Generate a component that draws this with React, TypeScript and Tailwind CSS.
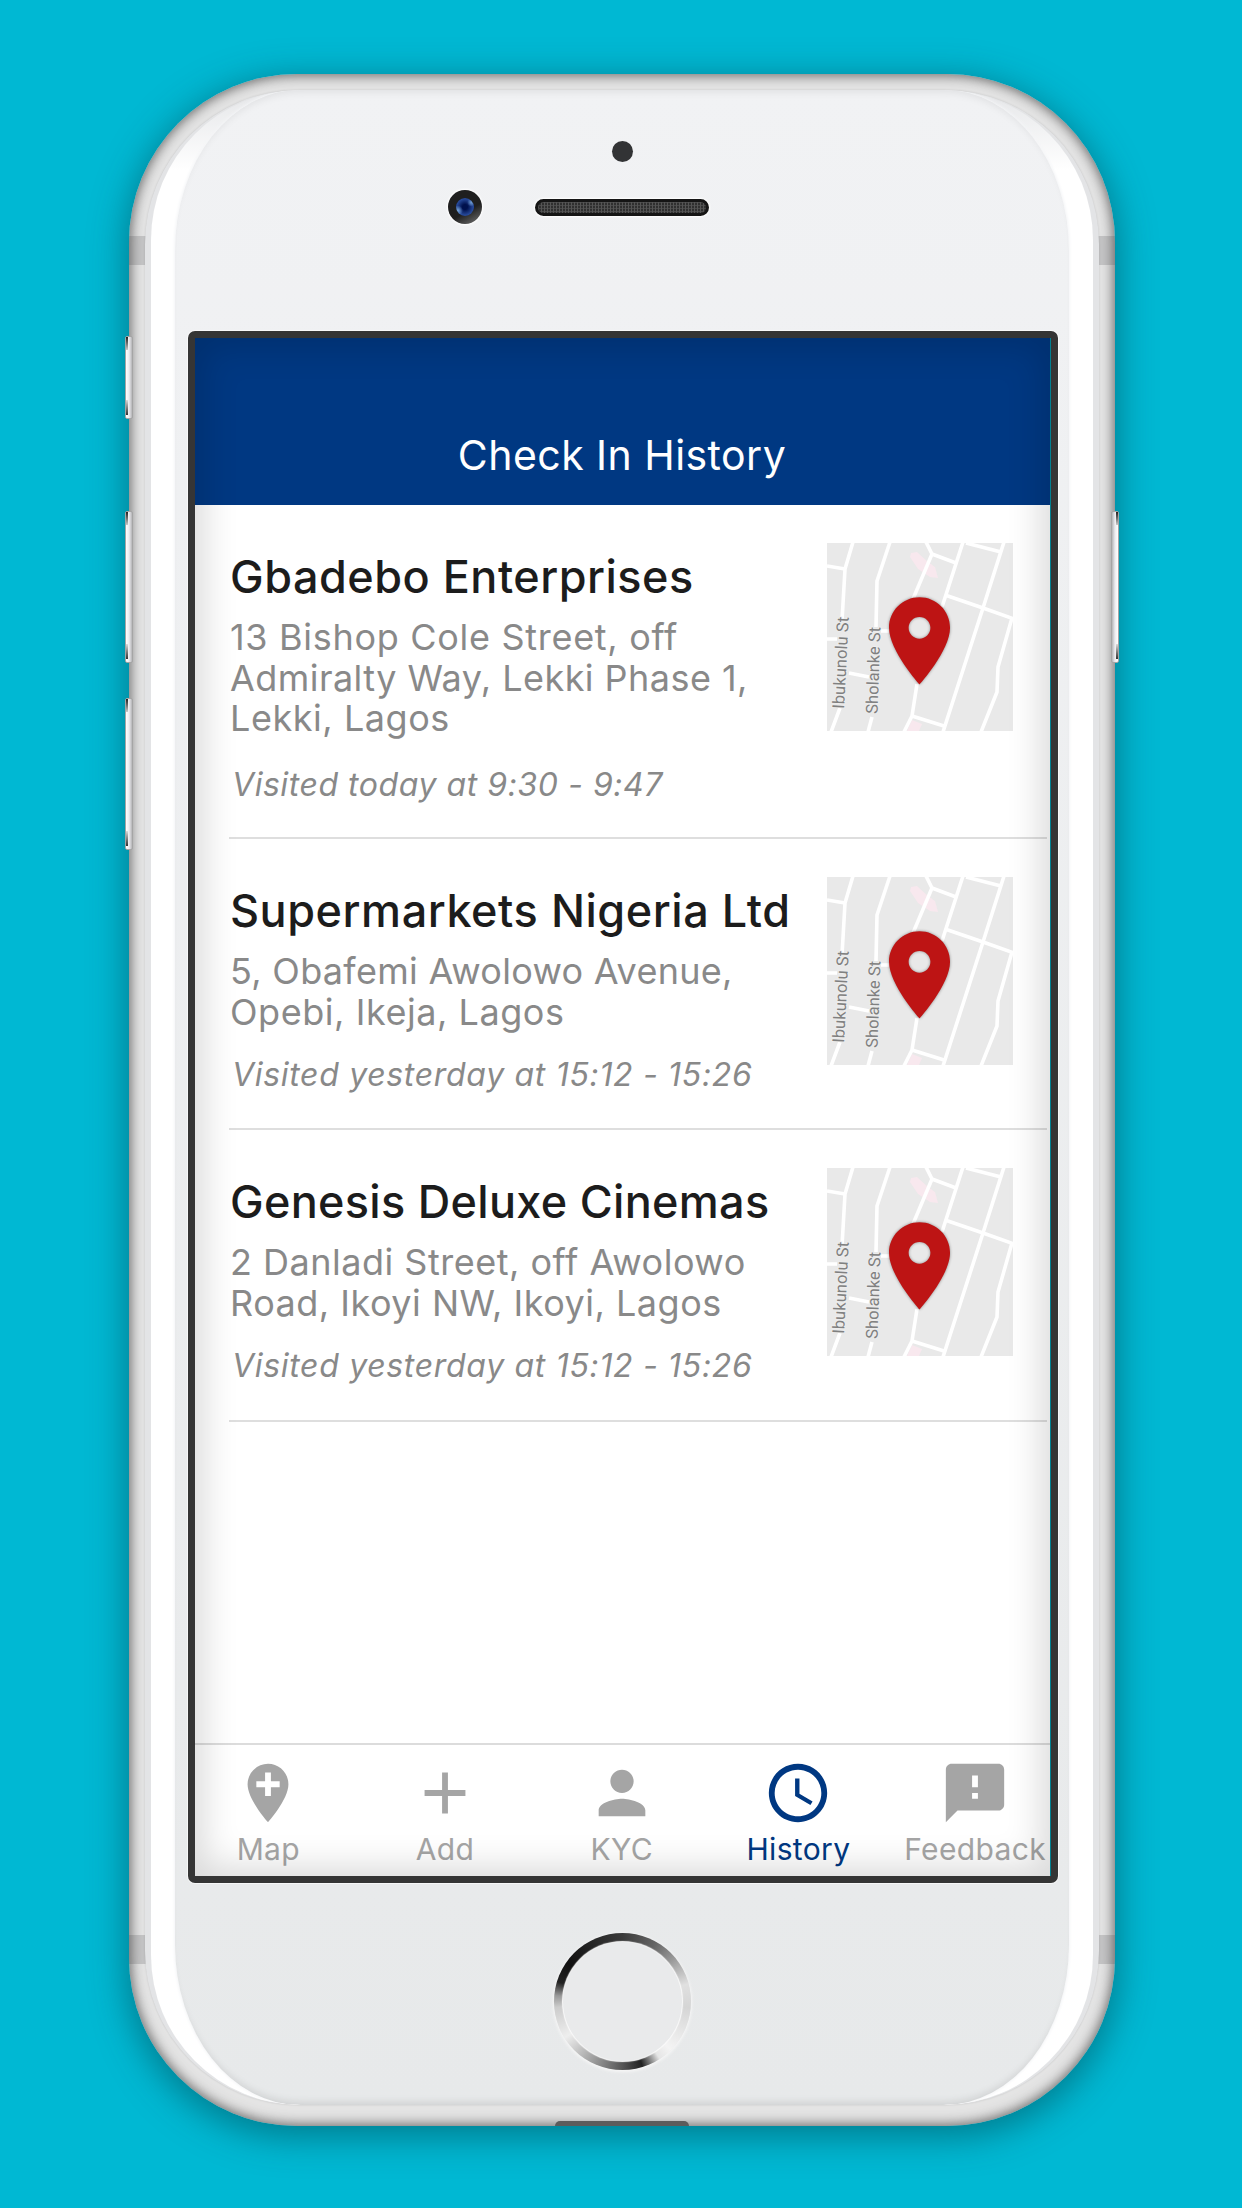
import clsx from 'clsx';

type Visit = {
  id: number;
  name: string;
  nameClass: string;
  address: { text: string; className: string }[];
  visited: string;
  visitedClass: string;
  rowClass: string;
};

const visits: Visit[] = [
  {
    id: 1,
    name: 'Gbadebo Enterprises',
    nameClass: 'tracking-[0.5px]',
    address: [
      { text: '13 Bishop Cole Street, off', className: 'tracking-[0.7px]' },
      { text: 'Admiralty Way, Lekki Phase 1,', className: 'tracking-[0.45px]' },
      { text: 'Lekki, Lagos', className: 'tracking-[0.55px]' },
    ],
    visited: 'Visited today at 9:30 - 9:47',
    visitedClass: 'mt-[28px] tracking-[0.55px]',
    rowClass: 'h-[334px]',
  },
  {
    id: 2,
    name: 'Supermarkets Nigeria Ltd',
    nameClass: 'tracking-[0.55px]',
    address: [
      { text: '5, Obafemi Awolowo Avenue,', className: 'tracking-[0.3px]' },
      { text: 'Opebi, Ikeja, Lagos', className: 'tracking-[0.55px]' },
    ],
    visited: 'Visited yesterday at 15:12 - 15:26',
    visitedClass: 'mt-[25px] tracking-[0.68px]',
    rowClass: 'h-[291px]',
  },
  {
    id: 3,
    name: 'Genesis Deluxe Cinemas',
    nameClass: 'tracking-[0.3px]',
    address: [
      { text: '2 Danladi Street, off Awolowo', className: 'tracking-[0.5px]' },
      { text: 'Road, Ikoyi NW, Ikoyi, Lagos', className: 'tracking-[0.5px]' },
    ],
    visited: 'Visited yesterday at 15:12 - 15:26',
    visitedClass: 'mt-[25px] tracking-[0.68px]',
    rowClass: 'h-[292px]',
  },
];

const tabs = [
  {
    label: 'Map',
    path: 'M12 2C8.14 2 5 5.14 5 9c0 5.25 7 13 7 13s7-7.75 7-13c0-3.86-3.14-7-7-7zm4 8h-3v3h-2v-3H8V8h3V5h2v3h3v2z',
  },
  { label: 'Add', path: 'M19 13h-6v6h-2v-6H5v-2h6V5h2v6h6v2z' },
  {
    label: 'KYC',
    path: 'M12 12c2.21 0 4-1.79 4-4s-1.79-4-4-4-4 1.79-4 4 1.79 4 4 4zm0 2c-2.67 0-8 1.34-8 4v2h16v-2c0-2.66-5.33-4-8-4z',
  },
  {
    label: 'History',
    path: 'M11.99 2C6.47 2 2 6.48 2 12s4.47 10 9.99 10C17.52 22 22 17.52 22 12S17.52 2 11.99 2zM12 20c-4.42 0-8-3.58-8-8s3.58-8 8-8 8 3.58 8 8-3.58 8-8 8zm.5-13H11v6l5.25 3.15.75-1.23-4.5-2.67z',
    active: true,
  },
  {
    label: 'Feedback',
    path: 'M20 2H4c-1.1 0-1.99.9-1.99 2L2 22l4-4h14c1.1 0 2-.9 2-2V4c0-1.1-.9-2-2-2zm-7 12h-2v-2h2v2zm0-4h-2V6h2v4z',
  },
];

function MapThumb() {
  return (
    <svg viewBox="0 0 186 188" className="w-[186px] h-[188px] shrink-0 mt-[38px] bg-[#e9e9e9]">
      <path d="M84 10l6-1 11 10 7 5 3 11-8-1-12-8-8-12z M85 177l10 4-3 7H80z" fill="#f8e8ee" />
      <g fill="none" stroke="#fff" strokeWidth="3.6">
        <path d="M26 -1L18 26 15 78 M0 23L18 26 M0 96h10 M13 165L4 189 M22 130l20 4" />
        <path d="M63 -1L50 38 49 84 M54 88h9 M45 174L41 189" />
        <path d="M99 -1L105 11 86 56 M105 11l24 9 M90 141L85 173 77 189 M85 173l32 10" />
        <path d="M136 -1L115 64 M139 0l35 9 M177 -1L156 65 116 189 M118 52l38 13 31 11" />
        <path d="M185 75L171 124 170 149 154 189" />
      </g>
      <g fill="#808080" stroke="#eee" strokeWidth="1.6" paintOrder="stroke" fontSize="16.5" fontFamily="Roboto, sans-serif">
        <text transform="translate(17 166) rotate(-87)" textLength="92" lengthAdjust="spacingAndGlyphs">Ibukunolu St</text>
        <text transform="translate(50.5 171) rotate(-88)" textLength="87" lengthAdjust="spacingAndGlyphs">Sholanke St</text>
      </g>
      <path
        transform="translate(40.2 45.6) scale(4.36)"
        d="M12 2C8.13 2 5 5.13 5 9c0 5.25 7 13 7 13s7-7.75 7-13c0-3.87-3.13-7-7-7zm0 9.5c-1.38 0-2.5-1.12-2.5-2.5s1.12-2.5 2.5-2.5 2.5 1.12 2.5 2.5-1.12 2.5-2.5 2.5z"
        fill="#bd1414"
        className="drop-shadow-[0_0.3px_0.4px_rgba(0,0,0,0.4)]"
      />
    </svg>
  );
}

function VisitRow({ visit }: { visit: Visit }) {
  return (
    <li className={clsx('flex justify-between ml-[34px] mr-[4px] pr-[34px] border-b-2 border-[#dedede]', visit.rowClass)}>
      <div className="pt-[42px] pl-px whitespace-nowrap">
        <h2 className={clsx('text-[45px] leading-[60px] font-medium text-[#1c1c1c]', visit.nameClass)}>{visit.name}</h2>
        <div className="mt-[10px] text-[36px] leading-[40.7px] text-[#898989]">
          {visit.address.map((line) => (
            <p key={line.text} className={line.className}>{line.text}</p>
          ))}
        </div>
        <p className={clsx('pl-[2px] text-[32px] leading-[36px] italic text-[#898989]', visit.visitedClass)}>{visit.visited}</p>
      </div>
      <MapThumb />
    </li>
  );
}

function TabBar() {
  return (
    <nav className="flex -mx-[15px] h-[133px] border-t-2 border-[#dcdcdc]">
      {tabs.map((tab) => (
        <button
          key={tab.label}
          className={clsx('flex flex-col items-center w-[176.7px] shrink-0 pt-[13px]', tab.active ? 'text-[#003882]' : 'text-[#a5a5a5]')}
        >
          <svg viewBox="0 0 24 24" fill="currentColor" className="size-[70px] block">
            <path d={tab.path} />
          </svg>
          <span className="text-[30px] leading-[36px] mt-[3px] tracking-[0.35px]">{tab.label}</span>
        </button>
      ))}
    </nav>
  );
}

function Screen() {
  return (
    <div className="relative ml-[13px] w-[870px] h-[1552px] shrink-0 rounded-[7px] border-[7px] border-[#353535] bg-white flex flex-col overflow-hidden shadow-[0_0_0_1px_rgba(255,255,255,0.6)]">
      <header className="h-[167px] shrink-0 bg-[#003882] flex justify-center items-end pb-[25px]">
        <h1 className="text-[41px] leading-[50px] text-white tracking-[0.45px] pr-[2px]">Check In History</h1>
      </header>
      <ul className="flex-1">
        {visits.map((visit) => (
          <VisitRow key={visit.id} visit={visit} />
        ))}
      </ul>
      <TabBar />
      {/* glass edge shading */}
      <div className="absolute inset-0 pointer-events-none border-r border-r-[#008090] shadow-[inset_0_0_34px_9px_rgba(0,0,0,0.15)]" />
    </div>
  );
}

function SideButton({ tall, right }: { tall?: boolean; right?: boolean }) {
  return (
    <div
      className={clsx(
        'w-[8px] rounded-[2px] border border-[#a5a5a5] from-white via-[#ececf0] to-[#b5b5b7] flex flex-col justify-between',
        tall ? 'h-[152px]' : 'h-[83px]',
        right ? 'items-end bg-linear-to-l' : 'items-start bg-linear-to-r',
      )}
    >
      <span className="w-[2px] h-[13px] bg-linear-to-b from-[#222] to-[#ccc]" />
      <span className="w-[2px] h-[15px] bg-linear-to-t from-[#333] to-[#ddd] mb-[3px]" />
    </div>
  );
}

function Sensors() {
  return (
    <div className="h-[241px] shrink-0 flex flex-col items-center pt-[51px]">
      <span className="size-[21px] rounded-full bg-[#323335]" />
      <div className="grid grid-cols-[1fr_174px_1fr] items-center w-full mt-[28px]">
        <span className="justify-self-end mr-[53px] size-[34px] rounded-full bg-[linear-gradient(150deg,#1f1f1f_60%,#777)] flex items-center justify-center shadow-[0_0_2px_1px_#fff]">
          <span className="size-[18px] rounded-full bg-[radial-gradient(circle_at_10%_70%,#7aa8dc,transparent_25%),radial-gradient(circle_at_85%_25%,#6e9ad0,transparent_20%),radial-gradient(circle,#00114d_20%,#274a9b_65%,#1d2f66)]" />
        </span>
        <span className="h-[17px] rounded-full border-[3px] border-[#151515] bg-[#303030] bg-[linear-gradient(90deg,#555_1px,transparent_1px),linear-gradient(#4a4a4a_1px,transparent_1px)] bg-[length:3px_3px] shadow-[0_0_2px_1px_#fff]" />
      </div>
    </div>
  );
}

function HomeButton() {
  return (
    <div className="flex justify-center pt-[50px] pl-px">
      <div className="size-[137px] rounded-full p-[9px] bg-[conic-gradient(from_0deg,#3a3a3a,#666_30deg,#999_50deg,#e0e0e0_75deg,#d5d5d5_95deg,#f4f4f4_135deg,#e5e5e5_147deg,#222_163deg,#555_180deg,#999_205deg,#eee_238deg,#ccc_265deg,#999_275deg,#222_287deg,#111_305deg,#3a3a3a_360deg)] shadow-[0_1px_3px_1px_#f6f6f6]">
        <div className="size-full rounded-full bg-[#e9eaeb] shadow-[0_0_1px_1px_#fbfbfb]" />
      </div>
    </div>
  );
}

export default function App() {
  return (
    <main className="w-[1242px] h-[2208px] bg-[#00b8d3] pt-[74px] pl-[125px] flex items-start overflow-hidden font-['Inter',sans-serif]">
      <div className="z-10 flex flex-col -mr-[4px] pt-[262px]">
        <SideButton />
        <div className="flex flex-col gap-[35px] pt-[92px]">
          <SideButton tall />
          <SideButton tall />
        </div>
      </div>

      {/* aluminium shell with antenna bands */}
      <div className="w-[986px] h-[2052px] shrink-0 flex flex-col items-center pt-[16px] rounded-[168px] overflow-hidden bg-[#e4e4e4] bg-[linear-gradient(transparent_162px,#c4c4c5_162px,#c4c4c5_191px,transparent_191px,transparent_1861px,#c4c4c5_1861px,#c4c4c5_1890px,transparent_1890px)] shadow-[0_8px_34px_4px_rgba(0,70,80,0.5),inset_0_0_12px_2px_rgba(70,70,70,0.75)]">
        <div className="w-[954px] h-[2015px] shrink-0 px-[6px] rounded-[154px] overflow-hidden bg-[#e3e4e6] shadow-[0_0_2px_rgba(0,0,0,0.15)]">
          <div className="h-full px-[24px] rounded-[150px] overflow-hidden bg-linear-to-b from-[#e8e9eb] from-[0.5%] via-white via-[4%] to-white to-[95%]">
            {/* front glass */}
            <div className="h-full flex flex-col rounded-[125px/160px] bg-linear-to-b from-[#f1f2f4] to-[#e7e9ea] shadow-[0_0_3px_1px_#f4f5f7,inset_0_8px_8px_-6px_rgba(0,0,0,0.08),inset_0_-8px_8px_-6px_rgba(0,0,0,0.12)]">
              <Sensors />
              <Screen />
              <HomeButton />
            </div>
          </div>
        </div>
        <span className="mt-[16px] w-[134px] h-[5px] rounded-t-[6px] bg-[#5c5c5c]" />
      </div>

      <div className="z-10 -ml-[4px] pt-[437px]">
        <SideButton tall right />
      </div>
    </main>
  );
}
